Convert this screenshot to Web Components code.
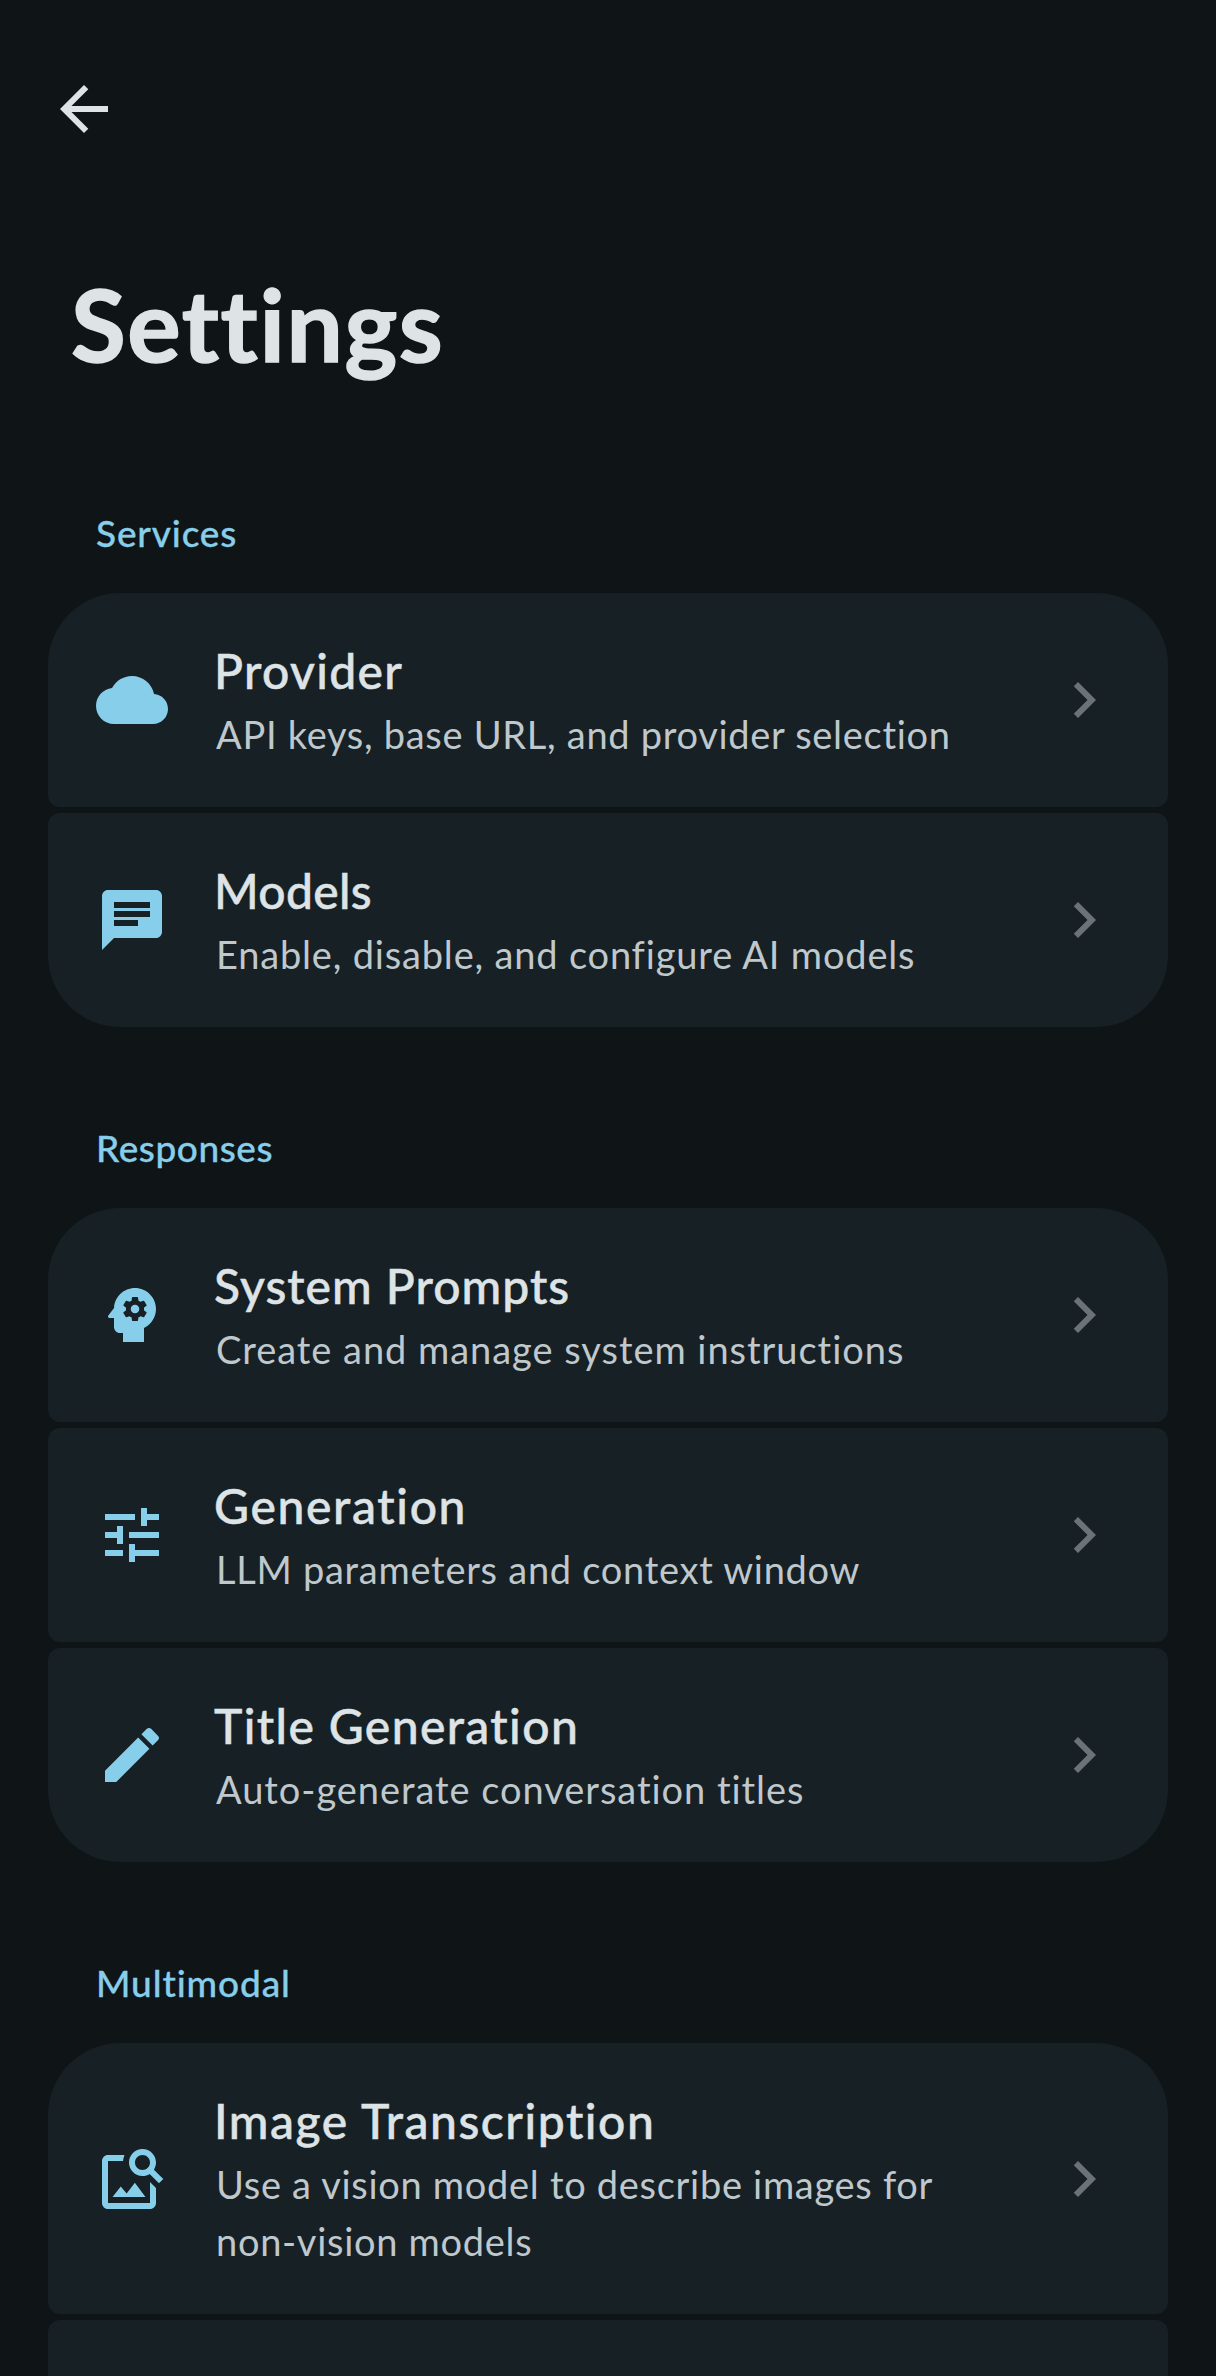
<!DOCTYPE html>
<html lang="en">
<head>
<meta charset="utf-8">
<title>Settings</title>
<style>
  html, body { margin: 0; height: 2376px; overflow: hidden; background: #0f1417; }
  body { font-family: "Lato", "Liberation Sans", sans-serif; }
</style>
</head>
<body>
<settings-page heading="Settings">
  <settings-section label="Services" style="--ls:.85px">
    <settings-row icon="cloud" title="Provider" sub="API keys, base URL, and provider selection" style="--ts:1.33px;--ss:.7px"></settings-row>
    <settings-row icon="chat" title="Models" sub="Enable, disable, and configure AI models" style="--ts:.31px;--ss:.82px"></settings-row>
  </settings-section>
  <settings-section label="Responses" style="--ls:.55px">
    <settings-row icon="psychology" title="System Prompts" sub="Create and manage system instructions" style="--ts:1.03px;--ss:.96px"></settings-row>
    <settings-row icon="tune" title="Generation" sub="LLM parameters and context window" style="--ts:1.66px;--ss:.73px"></settings-row>
    <settings-row icon="edit" title="Title Generation" sub="Auto-generate conversation titles" style="--ts:1.39px;--ss:.95px"></settings-row>
  </settings-section>
  <settings-section label="Multimodal" style="--ls:.9px">
    <settings-row icon="imagesearch" title="Image Transcription" sub="Use a vision model to describe images for non-vision models" style="--ts:1.54px;--ss:.7px"></settings-row>
    <settings-row></settings-row>
  </settings-section>
</settings-page>

<script>
const ICONS = {
    cloud: 'M19.35 10.04C18.67 6.59 15.64 4 12 4 9.11 4 6.6 5.64 5.35 8.04 2.34 8.36 0 10.91 0 14c0 3.31 2.69 6 6 6h13c2.76 0 5-2.24 5-5 0-2.64-2.05-4.78-4.65-4.96z',
    chat: 'M20 2H4c-1.1 0-1.99.9-1.99 2L2 22l4-4h14c1.1 0 2-.9 2-2V4c0-1.1-.9-2-2-2zM6 9h12v2H6V9zm8 5H6v-2h8v2zm4-6H6V6h12v2z',
    psychology: 'M13 8.57c-.79 0-1.43.64-1.43 1.43s.64 1.43 1.43 1.43 1.43-.64 1.43-1.43-.64-1.43-1.43-1.43zM13 3C9.25 3 6.2 5.94 6.02 9.64L4.1 12.2c-.25.33-.01.8.4.8H6v3c0 1.1.9 2 2 2h1v3h7v-4.68c2.36-1.12 4-3.53 4-6.32 0-3.87-3.13-7-7-7zm3 7c0 .13-.01.26-.02.39l.83.66c.08.06.1.16.05.25l-.8 1.39c-.05.09-.16.12-.24.09l-.99-.4c-.21.16-.43.29-.67.39L14 13.83c-.01.1-.1.17-.2.17h-1.6c-.1 0-.18-.07-.2-.17l-.15-1.06c-.25-.1-.47-.23-.68-.39l-.99.4c-.09.03-.2 0-.25-.09l-.8-1.39c-.05-.08-.03-.19.05-.25l.84-.66c-.01-.13-.02-.26-.02-.39s.02-.27.04-.39l-.85-.66c-.08-.06-.1-.16-.05-.26l.8-1.38c.05-.09.15-.12.24-.09l1 .4c.2-.15.43-.29.67-.39L12 6.17c.02-.1.1-.17.2-.17h1.6c.1 0 .18.07.2.17l.15 1.06c.24.1.46.23.67.39l1-.4c.09-.03.2 0 .24.09l.8 1.38c.05.09.03.2-.05.26l-.85.66c.03.12.04.25.04.39z',
    tune: 'M3 17v2h6v-2H3zM3 5v2h10V5H3zm10 16v-2h8v-2h-8v-2h-2v6h2zM7 9v2H3v2h4v2h2V9H7zm14 4v-2H11v2h10zm-6-4h2V7h4V5h-4V3h-2v6z',
    edit: 'M3 17.25V21h3.75L17.81 9.94l-3.75-3.75L3 17.25zM20.71 7.04c.39-.39.39-1.02 0-1.41l-2.34-2.34c-.39-.39-1.02-.39-1.41 0l-1.83 1.83 3.75 3.75 1.83-1.83z',
    imagesearch: 'M18 13v7H4V6h5.02c.05-.71.22-1.38.48-2H4c-1.1 0-2 .9-2 2v14c0 1.1.9 2 2 2h14c1.1 0 2-.9 2-2v-5l-2-2zm-1.5 5h-11l2.75-3.53 1.96 2.36 2.75-3.54L16.5 18zm2.8-9.11c.44-.7.7-1.51.7-2.39C20 4.01 17.99 2 15.5 2S11 4.01 11 6.5s2.01 4.5 4.49 4.5c.88 0 1.7-.26 2.39-.7L21 13.42 22.42 12 19.3 8.89zM15.5 9C14.12 9 13 7.88 13 6.5S14.12 4 15.5 4 18 5.12 18 6.5 16.88 9 15.5 9z'
};

class SettingsPage extends HTMLElement {
    connectedCallback() {
        this.attachShadow({ mode: 'open' });
        this.shadowRoot.innerHTML = `
        <style>
            :host { display: block; padding-top: 73px; }
            svg { display: block; margin-left: 48px; width: 72px; height: 72px; fill: #dee3e6; }
            h1 {
                margin: 118px 0 126px 71px;
                font-size: 100px; line-height: 120px; font-weight: 700;
                color: #dee3e6; letter-spacing: 1.6px;
                -webkit-text-stroke: 1.5px #dee3e6;
            }
        </style>
        <svg viewBox="0 0 24 24"><path d="M7.825 13L13.425 18.6 12 20 4 12 12 4 13.425 5.4 7.825 11H20V13H7.825Z"/></svg>
        <h1>${this.getAttribute('heading')}</h1>
        <slot></slot>
        `;
    }
}

class SettingsSection extends HTMLElement {
    connectedCallback() {
        this.attachShadow({ mode: 'open' });
        this.shadowRoot.innerHTML = `
        <style>
            :host { display: block; margin: 0 48px 97px; }
            .label {
                padding: 0 0 36px 48px;
                font-size: 37px; line-height: 48px; font-weight: 500;
                color: #87ceeb; letter-spacing: var(--ls, 0);
                -webkit-text-stroke: .3px #87ceeb;
            }
            .rows { display: flex; flex-direction: column; gap: 6px; }
        </style>
        <div class="label">${this.getAttribute('label')}</div>
        <div class="rows"><slot></slot></div>
        `;
    }
}

class SettingsRow extends HTMLElement {
    connectedCallback() {
        this.attachShadow({ mode: 'open' });
        const icon = ICONS[this.getAttribute('icon')];
        const title = this.getAttribute('title');
        const sub = this.getAttribute('sub');
        const top = this.previousElementSibling ? 12 : 72;
        const bottom = this.nextElementSibling ? 12 : 72;
        this.shadowRoot.innerHTML = `
        <style>
            :host {
                display: flex; align-items: center; gap: 48px;
                min-height: 128px;
                padding: 42px 48px 44px;
                background: #172025;
                border-radius: ${top}px ${top}px ${bottom}px ${bottom}px;
            }
            svg { display: block; flex: none; width: 72px; height: 72px; margin-top: 2px; }
            .icon { fill: #87ceeb; }
            .chev { fill: #6c7377; }
            .text { flex: 1; min-width: 0; }
            .title {
                margin-left: -2px;
                font-size: 48px; line-height: 71px; font-weight: 500;
                color: #dee3e6; letter-spacing: var(--ts, 0);
                -webkit-text-stroke: .5px #dee3e6;
            }
            .sub {
                font-size: 38px; line-height: 57px;
                color: #bfc8cc; letter-spacing: var(--ss, 0);
            }
        </style>
        ${title ? `
        <svg class="icon" viewBox="0 0 24 24"><path d="${icon}"/></svg>
        <div class="text">
            <div class="title">${title}</div>
            <div class="sub">${sub}</div>
        </div>
        <svg class="chev" viewBox="0 0 24 24"><path d="M10 6 8.59 7.41 13.17 12l-4.58 4.59L10 18l6-6z"/></svg>
        ` : ''}
        `;
    }
}

customElements.define('settings-page', SettingsPage);
customElements.define('settings-section', SettingsSection);
customElements.define('settings-row', SettingsRow);
</script>
</body>
</html>
